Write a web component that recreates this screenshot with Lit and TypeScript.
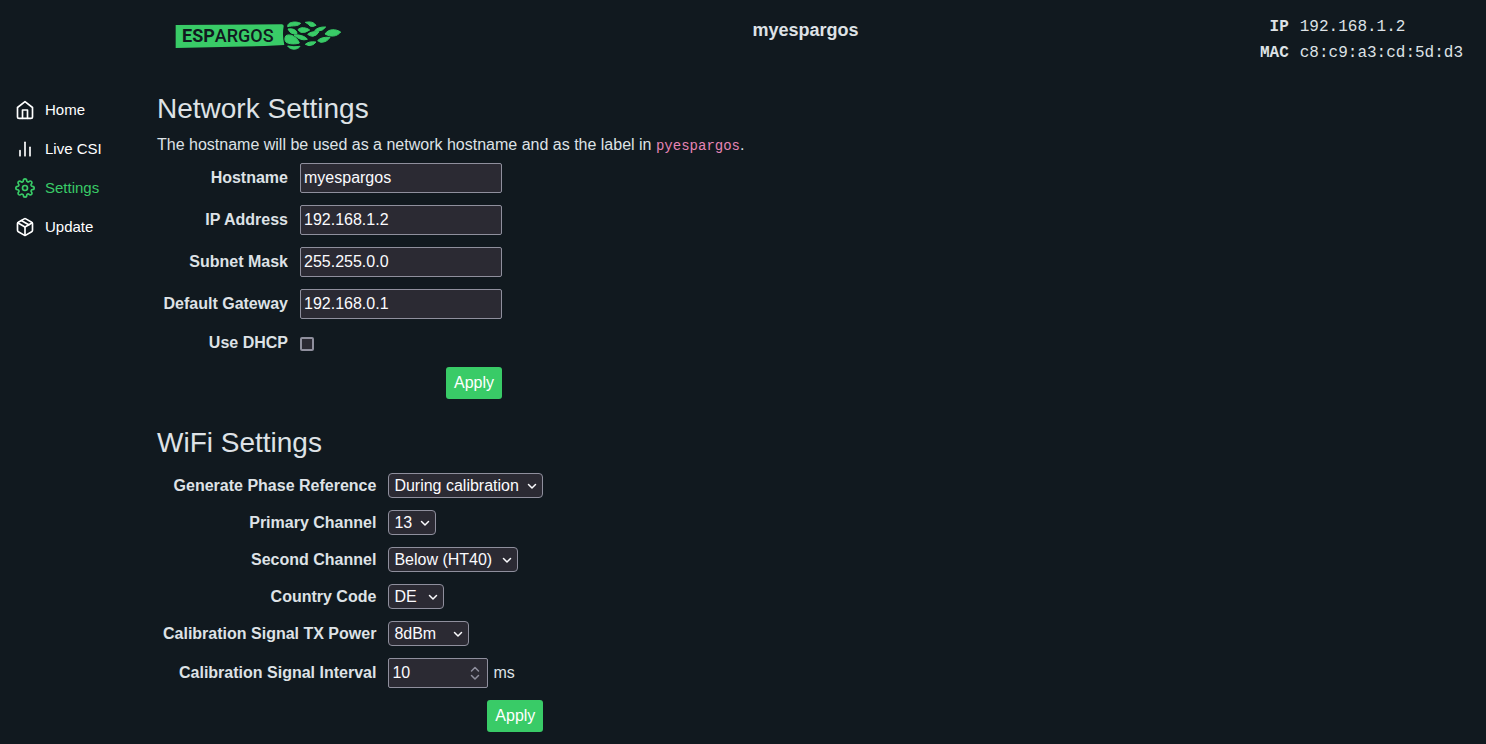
import { LitElement, html, css, svg } from "lit";
import { customElement } from "lit/decorators.js";
import { classMap } from "lit/directives/class-map.js";

const icons = {
  home: svg`<path d="M3 9l9-7 9 7v11a2 2 0 0 1-2 2H5a2 2 0 0 1-2-2z"/><polyline points="9 22 9 12 15 12 15 22"/>`,
  chart: svg`<line x1="18" y1="20" x2="18" y2="10"/><line x1="12" y1="20" x2="12" y2="4"/><line x1="6" y1="20" x2="6" y2="14"/>`,
  gear: svg`<circle cx="12" cy="12" r="3"/><path d="M19.4 15a1.65 1.65 0 0 0 .33 1.82l.06.06a2 2 0 0 1 0 2.83 2 2 0 0 1-2.83 0l-.06-.06a1.65 1.65 0 0 0-1.82-.33 1.65 1.65 0 0 0-1 1.51V21a2 2 0 0 1-2 2 2 2 0 0 1-2-2v-.09A1.65 1.65 0 0 0 9 19.4a1.65 1.65 0 0 0-1.82.33l-.06.06a2 2 0 0 1-2.83 0 2 2 0 0 1 0-2.83l.06-.06a1.65 1.65 0 0 0 .33-1.82 1.65 1.65 0 0 0-1.51-1H3a2 2 0 0 1-2-2 2 2 0 0 1 2-2h.09A1.65 1.65 0 0 0 4.6 9a1.65 1.65 0 0 0-.33-1.82l-.06-.06a2 2 0 0 1 0-2.83 2 2 0 0 1 2.83 0l.06.06a1.65 1.65 0 0 0 1.82.33H9a1.65 1.65 0 0 0 1-1.51V3a2 2 0 0 1 2-2 2 2 0 0 1 2 2v.09a1.65 1.65 0 0 0 1 1.51 1.65 1.65 0 0 0 1.82-.33l.06-.06a2 2 0 0 1 2.83 0 2 2 0 0 1 0 2.83l-.06.06a1.65 1.65 0 0 0-.33 1.82V9a1.65 1.65 0 0 0 1.51 1H21a2 2 0 0 1 2 2 2 2 0 0 1-2 2h-.09a1.65 1.65 0 0 0-1.51 1z"/>`,
  box: svg`<line x1="16.5" y1="9.4" x2="7.5" y2="4.21"/><path d="M21 16V8a2 2 0 0 0-1-1.73l-7-4a2 2 0 0 0-2 0l-7 4A2 2 0 0 0 3 8v8a2 2 0 0 0 1 1.73l7 4a2 2 0 0 0 2 0l7-4A2 2 0 0 0 21 16z"/><polyline points="3.27 6.96 12 12.01 20.73 6.96"/><line x1="12" y1="22.08" x2="12" y2="12"/>`,
};

const navItems = [
  { label: "Home", icon: icons.home, active: false },
  { label: "Live CSI", icon: icons.chart, active: false },
  { label: "Settings", icon: icons.gear, active: true },
  { label: "Update", icon: icons.box, active: false },
];

const networkFields = [
  { id: "hostname", label: "Hostname", value: "myespargos" },
  { id: "ip", label: "IP Address", value: "192.168.1.2" },
  { id: "netmask", label: "Subnet Mask", value: "255.255.0.0" },
  { id: "gateway", label: "Default Gateway", value: "192.168.0.1" },
];

const wifiSelects = [
  { id: "phase", label: "Generate Phase Reference", options: ["During calibration", "Always", "Never"], value: "During calibration" },
  { id: "primary", label: "Primary Channel", options: Array.from({ length: 13 }, (_, i) => String(i + 1)), value: "13" },
  { id: "second", label: "Second Channel", options: ["None", "Above (HT40)", "Below (HT40)"], value: "Below (HT40)" },
  { id: "country", label: "Country Code", options: ["DE", "US", "JP", "CN", "MO"], value: "DE" },
  { id: "power", label: "Calibration Signal TX Power", options: ["2dBm", "8dBm", "14dBm", "20dBm"], value: "8dBm" },
];

@customElement("app-root")
export class AppRoot extends LitElement {
  static styles = css`
    :host {
      display: block;
      min-height: 100vh;
      box-sizing: border-box;
      background: #11191f;
      color: #dee2e6;
      font: 16px/24px "Liberation Sans", Arial, sans-serif;
    }
    * { box-sizing: border-box; }
    .top {
      display: grid;
      grid-template-columns: auto 1fr auto;
      align-items: start;
      padding: 15px 23px 0 175px;
      height: 80px;
    }
    .logo { display: block; width: 167px; margin: 5px 9px 0 0; }
    .logo svg { display: block; width: 100%; }
    .green { fill: #39cb67; }
    .leaves { stroke: #39cb67; stroke-width: 3; stroke-linejoin: round; }
    .word { font: 500 54px Roboto, sans-serif; fill: #11191f; }
    .strong { font-weight: 700; }
    .name { margin: 3px 0 0; font-size: 18px; line-height: 24px; text-align: center; }
    .address {
      display: grid;
      grid-template-columns: auto auto;
      gap: 2px 11px;
      margin: 0;
      font-family: "Courier New", "Liberation Mono", monospace;
    }
    .address dt { font-weight: 700; text-align: right; }
    .address dd { margin: 0; }
    .body { display: grid; grid-template-columns: 157px 1fr; }
    .nav { display: flex; flex-direction: column; padding: 10px 0 0 15px; }
    .link {
      display: flex;
      align-items: center;
      gap: 10px;
      height: 39px;
      color: #fff;
      font-size: 15px;
      text-decoration: none;
    }
    .active { color: #39cb67; }
    .icon {
      width: 20px;
      height: 20px;
      fill: none;
      stroke: currentColor;
      stroke-width: 2;
      stroke-linecap: round;
      stroke-linejoin: round;
    }
    .section { padding-bottom: 9px; }
    .title { margin: 0; padding: 12px 0 7px; font-size: 28px; line-height: 34px; font-weight: 400; }
    .intro { margin: 0; }
    .code { font: 14px "Liberation Mono", monospace; color: #e685b5; }
    .form {
      display: grid;
      grid-template-columns: minmax(125px, max-content) max-content;
      gap: 12px;
      align-items: center;
      justify-content: start;
      padding: 6px;
    }
    .label { font-weight: 700; text-align: right; }
    .text, .select {
      font: inherit;
      color: #fbfbfe;
      background: #2b2a33;
      border: 1px solid #8f8f9d;
    }
    .text { width: 202px; height: 30px; padding: 0 3px; border-radius: 2px; }
    .number { width: 100px; appearance: textfield; }
    .number::-webkit-inner-spin-button { appearance: none; margin: 0; }
    .wrap { position: relative; display: flex; justify-self: start; }
    .select {
      appearance: none;
      height: 25px;
      line-height: 23px;
      padding: 0 23px 0 5px;
      border-radius: 4px;
    }
    .glyph {
      position: absolute;
      right: 6px;
      top: 0;
      height: 100%;
      width: 10px;
      fill: none;
      stroke: #fbfbfe;
      stroke-width: 1.5;
      stroke-linecap: round;
      stroke-linejoin: round;
      pointer-events: none;
    }
    .spin { right: 8px; stroke: #8f8f9d; }
    .cell { display: flex; align-items: center; height: 24px; }
    .check {
      appearance: none;
      width: 14px;
      height: 14px;
      margin: 1px 0 0;
      border: 2px solid #8f8f9d;
      border-radius: 2px;
      background: #2b2a33;
    }
    .check:checked { background: #39cb67; }
    .interval { display: flex; align-items: center; gap: 5px; }
    .apply {
      grid-column: 2;
      justify-self: end;
      height: 32px;
      padding: 0 8px;
      font: inherit;
      color: #fff;
      background: #39cb67;
      border: 0;
      border-radius: 3px;
    }
  `;

  private logo() {
    return html`<a class="logo" href="#" aria-label="ESPARGOS">
      <svg viewBox="30 28 501 96">
        <path class="green" d="M32 43L350 41Q357 42 356 47Q351 75 358 103L300 106L32 112Z"/>
        <g class="green leaves">
          <path d="M368 48C367 37 380 34 392 34Q402 35 407 38C399 48 384 44 368 48Z"/>
          <path d="M421 35Q444 30 453 44Q443 50 435 46Q431 40 421 35Z"/>
          <path d="M369 55C382 53 396 57 396 69Q388 71 380 68Q373 64 369 55Z"/>
          <path d="M399 57C406 48 424 50 434 58Q420 68 408 65Q402 62 399 57Z"/>
          <path d="M449 60Q459 48 482 49Q474 61 458 61Z"/>
          <path d="M428 71Q438 61 462 63Q456 75 443 77Q434 76 428 71Z"/>
          <path d="M480 70C490 54 512 54 527 64C516 78 498 80 480 70Z"/>
          <path d="M363 75C374 68 396 78 403 97C392 101 371 101 363 94C358 88 359 80 363 75Z"/>
          <path d="M387 73C402 71 422 77 427 86Q407 92 387 73Z"/>
          <path d="M458 90Q468 78 495 80Q486 95 467 95Z"/>
          <path d="M421 101Q431 91 453 94Q448 104 432 105Z"/>
          <path d="M368 106Q387 110 405 107C399 118 376 119 368 106Z"/>
        </g>
        <text class="word" x="51" y="95"><tspan class="strong">ESP</tspan>ARGOS</text>
      </svg>
    </a>`;
  }

  render() {
    return html`
      <header class="top">
        ${this.logo()}
        <h1 class="name">myespargos</h1>
        <dl class="address">
          <dt>IP</dt><dd>192.168.1.2</dd>
          <dt>MAC</dt><dd>c8:c9:a3:cd:5d:d3</dd>
        </dl>
      </header>
      <div class="body">
        <nav class="nav">
          ${navItems.map((item) => html`
            <a class=${classMap({ link: true, active: item.active })} href="#">
              <svg class="icon" viewBox="0 0 24 24" aria-hidden="true">${item.icon}</svg>${item.label}
            </a>`)}
        </nav>
        <main>
          <section class="section">
            <h2 class="title">Network Settings</h2>
            <p class="intro">The hostname will be used as a network hostname and as the label in <code class="code">pyespargos</code>.</p>
            <form class="form" @submit=${(e: Event) => e.preventDefault()}>
              ${networkFields.map((f) => html`
                <label class="label" for=${f.id}>${f.label}</label>
                <input class="text" id=${f.id} type="text" .value=${f.value}>`)}
              <label class="label" for="dhcp">Use DHCP</label>
              <span class="cell"><input class="check" id="dhcp" type="checkbox"></span>
              <button class="apply">Apply</button>
            </form>
          </section>
          <section>
            <h2 class="title">WiFi Settings</h2>
            <form class="form" @submit=${(e: Event) => e.preventDefault()}>
              ${wifiSelects.map((f) => html`
                <label class="label" for=${f.id}>${f.label}</label>
                <span class="wrap">
                  <select class="select" id=${f.id}>
                    ${f.options.map((o) => html`<option ?selected=${o === f.value}>${o}</option>`)}
                  </select>
                  <svg class="glyph" viewBox="0 0 10 24" aria-hidden="true"><path d="M1.5 11L5 14.5L8.5 11"/></svg>
                </span>`)}
              <label class="label" for="interval">Calibration Signal Interval</label>
              <span class="interval">
                <span class="wrap">
                  <input class="text number" id="interval" type="number" .value=${"10"}>
                  <svg class="glyph spin" viewBox="0 0 10 30" aria-hidden="true"><path d="M1.5 13L5 9.5L8.5 13M1.5 17.5L5 21L8.5 17.5"/></svg>
                </span>ms
              </span>
              <button class="apply">Apply</button>
            </form>
          </section>
        </main>
      </div>`;
  }
}
